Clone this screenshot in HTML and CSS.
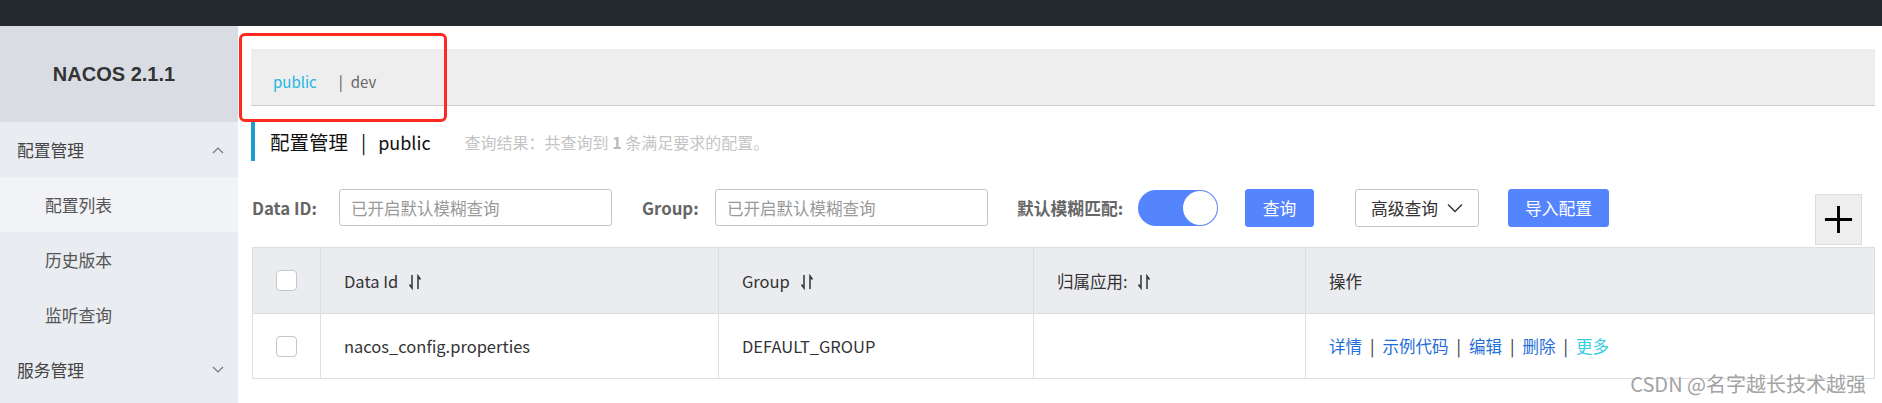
FILE: index.html
```html
<!DOCTYPE html>
<html lang="zh-CN">
<head>
    <meta charset="UTF-8">
    <meta name="viewport" content="width=device-width, initial-scale=1.0">
    <title>Nacos</title>
    <link rel="stylesheet" href="styles.css">
</head>
<body>
    <div class="topbar"></div>

    <div class="layout">
        <aside class="sidebar">
            <div class="brand">NACOS 2.1.1</div>
            <ul class="menu">
                <li class="menu-group">
                    <span>配置管理</span>
                    <svg class="chevron" viewBox="0 0 12 8"><path d="M1 7L6 2l5 5"/></svg>
                </li>
                <li class="menu-item active">配置列表</li>
                <li class="menu-item">历史版本</li>
                <li class="menu-item">监听查询</li>
                <li class="menu-group">
                    <span>服务管理</span>
                    <svg class="chevron" viewBox="0 0 12 8"><path d="M1 1l5 5 5-5"/></svg>
                </li>
            </ul>
        </aside>

        <main class="main">
            <div class="ns-bar">
                <span class="ns-active">public</span>
                <span class="ns-sep">|</span>
                <span class="ns-item">dev</span>
            </div>

            <div class="page-title">
                <span class="title-text">配置管理</span>
                <span class="title-sep">|</span>
                <span class="title-ns">public</span>
                <span class="title-desc">查询结果：共查询到 <b>1</b> 条满足要求的配置。</span>
            </div>

            <div class="filters">
                <label class="filter-label label-id">Data ID:</label>
                <input class="filter-input" type="text" placeholder="已开启默认模糊查询">
                <label class="filter-label label-group">Group:</label>
                <input class="filter-input" type="text" placeholder="已开启默认模糊查询">
                <label class="filter-label label-fuzzy">默认模糊匹配:</label>
                <div class="switch"><span class="switch-knob"></span></div>
                <button class="btn btn-primary btn-query">查询</button>
                <button class="btn btn-normal btn-advanced">
                    高级查询
                    <svg class="btn-arrow" viewBox="0 0 16 10"><path d="M1 1.5l7 7 7-7"/></svg>
                </button>
                <button class="btn btn-primary btn-import">导入配置</button>
                <button class="btn-add">
                    <svg viewBox="0 0 30 30"><path d="M15 1v28M1 15h28"/></svg>
                </button>
            </div>

            <table class="config-table">
                <colgroup>
                    <col class="col-check">
                    <col class="col-id">
                    <col class="col-group">
                    <col class="col-app">
                    <col>
                </colgroup>
                <thead>
                    <tr>
                        <th class="cell-check"><span class="checkbox"></span></th>
                        <th>Data Id
                            <svg class="sort" viewBox="0 0 14 16"><path d="M4 1v13L1.5 10.5M10 15V2l2.5 3.5"/></svg>
                        </th>
                        <th>Group
                            <svg class="sort" viewBox="0 0 14 16"><path d="M4 1v13L1.5 10.5M10 15V2l2.5 3.5"/></svg>
                        </th>
                        <th>归属应用:
                            <svg class="sort" viewBox="0 0 14 16"><path d="M4 1v13L1.5 10.5M10 15V2l2.5 3.5"/></svg>
                        </th>
                        <th>操作</th>
                    </tr>
                </thead>
                <tbody>
                    <tr>
                        <td class="cell-check"><span class="checkbox"></span></td>
                        <td>nacos_config.properties</td>
                        <td>DEFAULT_GROUP</td>
                        <td></td>
                        <td class="actions">
                            <a href="#">详情</a><span class="bar">|</span><a href="#">示例代码</a><span class="bar">|</span><a href="#">编辑</a><span class="bar">|</span><a href="#">删除</a><span class="bar">|</span><a href="#" class="more">更多</a>
                        </td>
                    </tr>
                </tbody>
            </table>
        </main>
    </div>

    <div class="annotation"></div>
    <div class="watermark">CSDN @名字越长技术越强</div>
</body>
</html>
```

FILE: styles.css
```css
* {
    margin: 0;
    padding: 0;
    box-sizing: border-box;
}

body {
    width: 1882px;
    min-height: 403px;
    background-color: #fff;
    color: #333;
    font-family: 'Noto Sans CJK SC', 'Noto Sans', sans-serif;
    font-size: 16.8px;
    position: relative;
    overflow: hidden;
}

.topbar {
    height: 26px;
    background-color: #252a2f;
}

.layout {
    display: flex;
    min-height: 377px;
}

/* sidebar */

.sidebar {
    width: 238px;
    flex: none;
    background-color: #e9ecf0;
}

.brand {
    height: 96px;
    display: flex;
    align-items: center;
    justify-content: center;
    padding-right: 10px;
    background-color: #d9dde3;
    font-family: 'Liberation Sans', Arial, sans-serif;
    font-size: 20px;
    font-weight: bold;
    color: #333;
}

.menu {
    list-style: none;
}

.menu-group,
.menu-item {
    height: 55px;
    display: flex;
    align-items: center;
}

.menu-group {
    justify-content: space-between;
    padding: 0 14px 0 17px;
    color: #444;
}

.menu-item {
    padding-left: 45px;
    color: #555;
}

.menu-item.active {
    background-color: #f2f3f6;
}

.chevron {
    width: 12px;
    height: 8px;
    fill: none;
    stroke: #777;
    stroke-width: 1.2;
}

/* main */

.main {
    flex: 1;
    padding: 23px 7px 0 13px;
    min-width: 0;
}

.ns-bar {
    height: 57px;
    display: flex;
    align-items: center;
    padding: 9px 0 0 22px;
    background-color: #eeeeee;
    border-bottom: 1px solid #cbcbcb;
    font-size: 15px;
}

.ns-active {
    color: #23b7e5;
}

.ns-sep {
    color: #555;
    margin: 0 8px 0 22px;
}

.ns-item {
    color: #666;
}

.page-title {
    height: 39px;
    margin-top: 16px;
    display: flex;
    align-items: center;
    padding-left: 15px;
    border-left: 4px solid #1e9bd3;
}

.title-text {
    font-size: 19.5px;
    color: #111;
}

.title-ns {
    font-size: 18px;
    color: #111;
}

.title-sep {
    font-size: 19px;
    color: #111;
    margin: 0 12px 0 13px;
}

.title-desc {
    margin-left: 34px;
    font-size: 16px;
    color: #c4c4c4;
}

.title-desc b {
    color: #bbb;
}

/* filter row */

.filters {
    display: flex;
    align-items: flex-start;
    margin-top: 28px;
    height: 58px;
}

.filter-label {
    height: 38px;
    display: flex;
    align-items: center;
    padding-left: 1px;
    font-weight: bold;
    color: #666;
    flex: none;
}

.label-id {
    width: 88px;
}

.label-group {
    width: 74px;
    margin-left: 29px;
}

.label-fuzzy {
    width: 122px;
    margin-left: 28px;
}

.filter-input {
    width: 273px;
    height: 37px;
    padding: 0 11px;
    border: 1px solid #c4c6cf;
    border-radius: 3px;
    font-family: inherit;
    font-size: 16.5px;
    color: #333;
    outline: none;
}

.filter-input::placeholder {
    color: #999;
}

.switch {
    width: 80px;
    height: 36px;
    margin-top: 1px;
    border-radius: 18px;
    background-color: #5584ff;
    position: relative;
    flex: none;
}

.switch-knob {
    position: absolute;
    top: 1px;
    right: 1px;
    width: 34px;
    height: 34px;
    border-radius: 50%;
    background-color: #fff;
}

.btn {
    height: 38px;
    border-radius: 3px;
    font-family: inherit;
    font-size: 16.8px;
    display: flex;
    align-items: center;
    justify-content: center;
    flex: none;
}

.btn-primary {
    background-color: #5584ff;
    border: 1px solid #5584ff;
    color: #fff;
}

.btn-normal {
    background-color: #fff;
    border: 1px solid #c4c6cf;
    color: #333;
}

.btn-query {
    width: 69px;
    margin-left: 27px;
}

.btn-advanced {
    width: 124px;
    margin-left: 41px;
    gap: 9px;
}

.btn-arrow {
    width: 16px;
    height: 10px;
    fill: none;
    stroke: #333;
    stroke-width: 1.4;
}

.btn-import {
    width: 101px;
    margin-left: 29px;
}

.btn-add {
    width: 47px;
    height: 51px;
    margin: 5px 13px 0 auto;
    background-color: #eee;
    border: 1px solid #dcdcdc;
    display: flex;
    align-items: center;
    justify-content: center;
}

.btn-add svg {
    width: 29px;
    height: 29px;
    fill: none;
    stroke: #000;
    stroke-width: 3;
}

/* table */

.config-table {
    width: calc(100% - 1px);
    margin-left: 1px;
    border-collapse: collapse;
    table-layout: fixed;
}

.col-check { width: 68px; }
.col-id { width: 398px; }
.col-group { width: 315px; }
.col-app { width: 272px; }

.config-table th,
.config-table td {
    border: 1px solid #dcdee3;
    text-align: left;
    font-weight: normal;
    padding: 0 0 0 23px;
    color: #333;
    font-size: 16.5px;
    white-space: nowrap;
}

.config-table th {
    height: 66px;
    background-color: #ebecf0;
}

.config-table td {
    height: 65px;
    background-color: #fff;
}

.config-table .cell-check {
    padding-left: 23px;
}

.checkbox {
    display: block;
    width: 21px;
    height: 21px;
    border: 1px solid #c4c6cf;
    border-radius: 4px;
    background-color: #fff;
}

.sort {
    width: 14px;
    height: 16px;
    margin-left: 6px;
    vertical-align: -2px;
    fill: none;
    stroke: #333;
    stroke-width: 1.5;
}

.actions a {
    color: #1f6fd9;
    text-decoration: none;
}

.actions a.more {
    color: #33cde5;
}

.actions .bar {
    color: #333;
    margin: 0 8px;
}

/* overlays */

.annotation {
    position: absolute;
    left: 239px;
    top: 33px;
    width: 208px;
    height: 89px;
    border: 3px solid #ff2a1f;
    border-radius: 6px;
    pointer-events: none;
}

.watermark {
    position: absolute;
    right: 16px;
    bottom: 7px;
    font-size: 20px;
    line-height: 24px;
    color: #a3a3a3;
    text-shadow: 0 0 2px #fff;
    pointer-events: none;
}
```
